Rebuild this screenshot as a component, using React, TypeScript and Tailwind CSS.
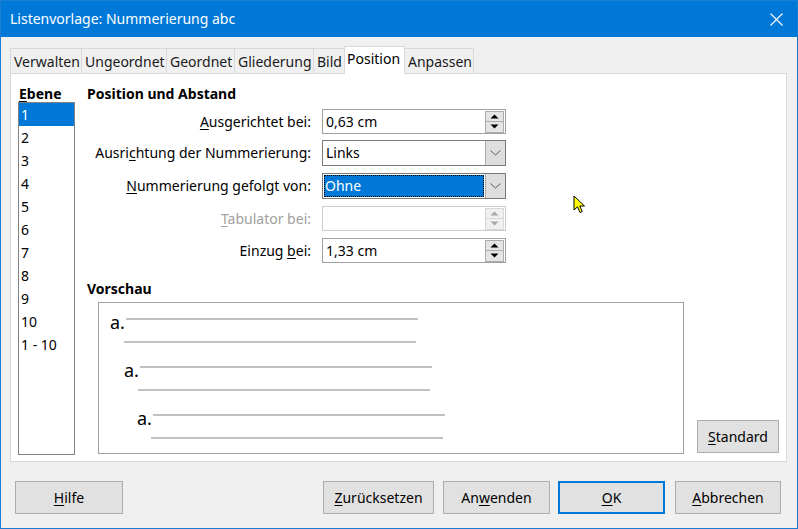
import React from "react";

const FONT = { fontFamily: '"Noto Sans", "Open Sans", sans-serif' };

function Tri({ up, disabled }: { up: boolean; disabled?: boolean }) {
  const color = disabled ? "#a8a8a8" : "#000000";
  return (
    <svg width="9" height="5" viewBox="0 0 9 5">
      {up ? (
        <polygon points="0.5,4.5 8.5,4.5 4.5,0.5" fill={color} />
      ) : (
        <polygon points="0.5,0.5 8.5,0.5 4.5,4.5" fill={color} />
      )}
    </svg>
  );
}

function Spin({ value, disabled }: { value: string; disabled?: boolean }) {
  return (
    <div
      className={`flex items-center w-[184px] h-[25px] border bg-white pl-[3px] pr-[1px] ${
        disabled ? "border-[#cccccc]" : "border-[#a0a0a0]"
      }`}
    >
      <span className="flex-1 leading-[23px]">{value}</span>
      <div className="flex flex-col w-[19px] h-[22px]">
        <div
          className={`flex items-center justify-center h-[11px] border ${
            disabled ? "border-[#d8d8d8] bg-[#f0f0f0]" : "border-[#adadad] bg-[#e5e5e5]"
          }`}
        >
          <Tri up disabled={disabled} />
        </div>
        <div
          className={`flex items-center justify-center h-[11px] border border-t-0 ${
            disabled ? "border-[#d8d8d8] bg-[#f0f0f0]" : "border-[#adadad] bg-[#e5e5e5]"
          }`}
        >
          <Tri up={false} disabled={disabled} />
        </div>
      </div>
    </div>
  );
}

function Chevron() {
  return (
    <svg width="11" height="6" viewBox="0 0 11 6">
      <polyline points="0.5,0.5 5.5,5 10.5,0.5" fill="none" stroke="#5a5a5a" strokeWidth="1" />
    </svg>
  );
}

function Combo({ value, focused }: { value: string; focused?: boolean }) {
  return (
    <div className="flex items-stretch w-[184px] h-[26px] border border-[#7a7a7a] bg-white">
      {focused ? (
        <div className="flex-1 flex p-[1px]">
          <div className="flex-1 bg-[#0078d7] text-white leading-[21px] pl-[1px] outline-1 outline-dotted outline-black -outline-offset-1">
            {value}
          </div>
        </div>
      ) : (
        <div className="flex-1 leading-[24px] pl-[3px]">{value}</div>
      )}
      <div className="w-[20px] flex items-center justify-center bg-[#dedede] border-l border-[#adadad]">
        <Chevron />
      </div>
    </div>
  );
}

function Btn({
  w,
  children,
  def,
}: {
  w: string;
  children: React.ReactNode;
  def?: boolean;
}) {
  return (
    <div
      className={`${w} h-[33px] flex items-center justify-center bg-[#e1e1e1] ${
        def ? "border-2 border-[#0078d7]" : "border border-[#adadad]"
      }`}
    >
      {children}
    </div>
  );
}

function PreviewBlock({ indent, first }: { indent: string; first?: boolean }) {
  return (
    <div className={`flex flex-col ${indent} ${first ? "" : "mt-[23px]"}`}>
      <div className="flex items-start h-[2px]">
        <span className="w-[16px] text-[18px] leading-[18px] -mt-[5px]">a.</span>
        <div className="w-[292px] h-[2px] bg-[#c0c0c0]"></div>
      </div>
      <div className="ml-[14px] mt-[21px] w-[292px] h-[2px] bg-[#c0c0c0]"></div>
    </div>
  );
}

export default function App() {
  const tabs: { label: string; w: string; active?: boolean }[] = [
    { label: "Verwalten", w: "w-[72px]" },
    { label: "Ungeordnet", w: "w-[86px]" },
    { label: "Geordnet", w: "w-[69px]" },
    { label: "Gliederung", w: "w-[80px]" },
    { label: "Bild", w: "w-[32px]" },
    { label: "Position", w: "w-[61px]", active: true },
    { label: "Anpassen", w: "w-[70px]" },
  ];
  const levels = ["1", "2", "3", "4", "5", "6", "7", "8", "9", "10", "1 - 10"];

  return (
    <div
      className="relative w-[798px] h-[529px] bg-[#f0f0f0] border border-[#1a7fd4] flex flex-col overflow-hidden text-[14px] text-black"
      style={FONT}
    >
      {/* Title bar */}
      <div className="h-[36px] bg-[#0078d7] flex items-center justify-between pl-[9px] pr-[14px] text-white">
        <span className="text-[14px] -mt-[1px]">Listenvorlage: Nummerierung abc</span>
        <svg width="13" height="13" viewBox="0 0 13 13">
          <line x1="0.5" y1="0.5" x2="12.5" y2="12.5" stroke="#ffffff" strokeWidth="1.1" />
          <line x1="12.5" y1="0.5" x2="0.5" y2="12.5" stroke="#ffffff" strokeWidth="1.1" />
        </svg>
      </div>

      {/* Body */}
      <div className="flex flex-col px-[9px] pt-[9px]">
        {/* Tabs */}
        <div className="flex items-end h-[27px]">
          {tabs.map((t, i) =>
            t.active ? (
              <div
                key={t.label}
                className={`${t.w} h-[28px] -mb-[1px] -ml-[1px] relative z-10 bg-white border border-b-0 border-[#d9d9d9] pl-[2px] leading-[24px]`}
              >
                {t.label}
              </div>
            ) : (
              <div
                key={t.label}
                className={`${t.w} h-[25px] bg-[#f0f0f0] border border-b-0 border-[#d9d9d9] ${
                  i > 0 ? "-ml-[1px]" : ""
                } pl-[3px] leading-[25px] text-[#1a1a1a]`}
              >
                {t.label}
              </div>
            )
          )}
        </div>

        {/* Panel */}
        <div className="w-[777px] h-[389px] bg-white border border-[#d9d9d9] flex pt-[11px] pl-[7px]">
          {/* Levels */}
          <div className="flex flex-col w-[57px]">
            <div className="h-[17px] leading-[17px] font-bold pl-[1px]">
              <u className="underline-offset-2">E</u>bene
            </div>
            <div className="h-[353px] border border-[#828282] flex flex-col">
              {levels.map((l, i) => (
                <div
                  key={l}
                  className={`h-[23px] leading-[23px] pl-[2px] ${
                    i === 0 ? "bg-[#0078d7] text-white" : ""
                  }`}
                >
                  {l}
                </div>
              ))}
            </div>
          </div>

          {/* Right column */}
          <div className="flex flex-col ml-[12px]">
            <div className="h-[17px] leading-[17px] font-bold">Position und Abstand</div>
            <div className="flex flex-col mt-[7px]">
              <div className="flex items-center h-[25px]">
                <div className="w-[224px] text-right">
                  <u className="underline-offset-2">A</u>usgerichtet bei:
                </div>
                <div className="ml-[11px]">
                  <Spin value="0,63 cm" />
                </div>
              </div>
              <div className="flex items-center h-[25px] mt-[6px]">
                <div className="w-[224px] text-right">
                  Ausri<u className="underline-offset-2">c</u>htung der Nummerierung:
                </div>
                <div className="ml-[11px]">
                  <Combo value="Links" />
                </div>
              </div>
              <div className="flex items-center h-[25px] mt-[8px]">
                <div className="w-[224px] text-right">
                  <u className="underline-offset-2">N</u>ummerierung gefolgt von:
                </div>
                <div className="ml-[11px]">
                  <Combo value="Ohne" focused />
                </div>
              </div>
              <div className="flex items-center h-[25px] mt-[8px]">
                <div className="w-[224px] text-right text-[#a0a0a0]">
                  <u className="underline-offset-2">T</u>abulator bei:
                </div>
                <div className="ml-[11px]">
                  <Spin value="" disabled />
                </div>
              </div>
              <div className="flex items-center h-[25px] mt-[7px]">
                <div className="w-[224px] text-right">
                  Einzug <u className="underline-offset-2">b</u>ei:
                </div>
                <div className="ml-[11px]">
                  <Spin value="1,33 cm" />
                </div>
              </div>
            </div>

            <div className="h-[17px] leading-[17px] font-bold mt-[17px]">Vorschau</div>
            <div className="flex items-end mt-[5px]">
              <div className="ml-[11px] w-[586px] h-[152px] border border-[#a0a0a0] bg-white pt-[15px] pl-[11px] flex flex-col">
                <PreviewBlock indent="ml-0" first />
                <PreviewBlock indent="ml-[14px]" />
                <PreviewBlock indent="ml-[27px]" />
              </div>
              <div className="ml-[13px] mb-[1px]">
                <Btn w="w-[82px]">
                  <span>
                    <u className="underline-offset-2">S</u>tandard
                  </span>
                </Btn>
              </div>
            </div>
          </div>
        </div>

        {/* Bottom buttons */}
        <div className="flex items-center mt-[19px] pl-[5px] pr-[7px]">
          <Btn w="w-[108px]">
            <span>
              <u className="underline-offset-2">H</u>ilfe
            </span>
          </Btn>
          <div className="flex-1"></div>
          <div className="flex items-center">
            <Btn w="w-[111px]">
              <span>
                <u className="underline-offset-2">Z</u>urücksetzen
              </span>
            </Btn>
            <div className="ml-[9px]">
              <Btn w="w-[107px]">
                <span>
                  An<u className="underline-offset-2">w</u>enden
                </span>
              </Btn>
            </div>
            <div className="ml-[8px]">
              <Btn w="w-[107px]" def>
                <span>
                  <u className="underline-offset-2">O</u>K
                </span>
              </Btn>
            </div>
            <div className="ml-[10px]">
              <Btn w="w-[106px]">
                <span>
                  <u className="underline-offset-2">A</u>bbrechen
                </span>
              </Btn>
            </div>
          </div>
        </div>
      </div>

      {/* Mouse cursor overlay */}
      <svg
        className="absolute left-[572px] top-[194px]"
        width="14"
        height="20"
        viewBox="0 0 14 20"
      >
        <path
          d="M1 1 L1 15 L4.5 11.8 L7 17.5 L9.2 16.5 L6.8 11 L11.5 11 Z"
          fill="#ffff00"
          stroke="#000000"
          strokeWidth="1"
          strokeLinejoin="miter"
        />
      </svg>
    </div>
  );
}
